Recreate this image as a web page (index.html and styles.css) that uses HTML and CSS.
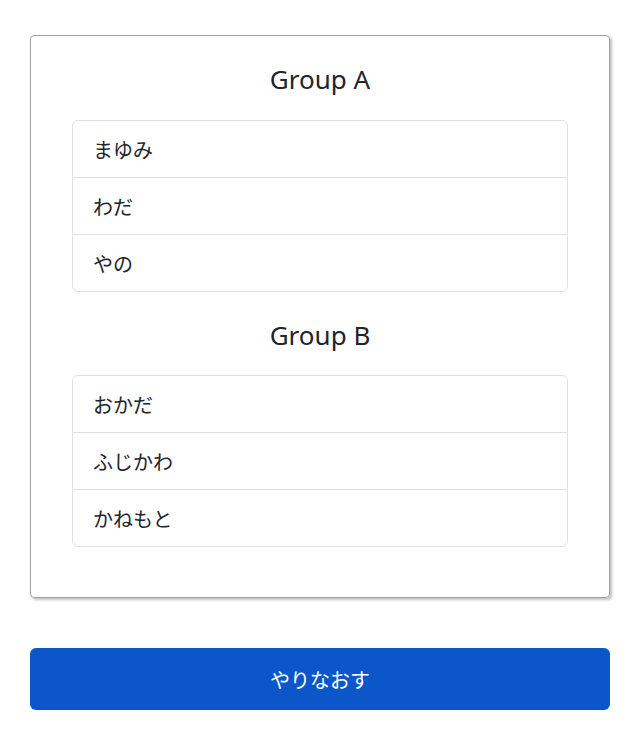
FILE: index.html
```html
<!DOCTYPE html>
<html lang="ja">
<head>
    <meta charset="UTF-8">
    <meta name="viewport" content="width=device-width, initial-scale=1.0">
    <title>グループ分け</title>
    <link rel="stylesheet" href="styles.css">
</head>
<body>
    <div class="card">
        <h2 class="group-title">Group A</h2>
        <ul class="member-list">
            <li>まゆみ</li>
            <li>わだ</li>
            <li>やの</li>
        </ul>

        <h2 class="group-title second">Group B</h2>
        <ul class="member-list">
            <li>おかだ</li>
            <li>ふじかわ</li>
            <li>かねもと</li>
        </ul>
    </div>

    <button class="retry-btn">やりなおす</button>
</body>
</html>
```

FILE: styles.css
```css
body {
    font-family: "Noto Sans", "Noto Sans CJK JP", sans-serif;
    color: #212529;
    margin: 0;
    padding: 35px 30px 0;
    background: #fff;
}
.card {
    border: 1px solid #a0a0a0;
    border-radius: 4px;
    box-shadow: 2px 2px 3px rgba(0, 0, 0, 0.25);
    padding: 26px 41px 50px;
}
.group-title {
    font-size: 26px;
    font-weight: 400;
    line-height: 34px;
    text-align: center;
    margin: 0 0 24px;
}
.group-title.second {
    margin-top: 26px;
    margin-bottom: 23px;
}
.member-list {
    list-style: none;
    margin: 0;
    padding: 0;
    border: 1px solid #dee2e6;
    border-radius: 6px;
}
.member-list li {
    font-size: 20px;
    line-height: 32px;
    padding: 14px 20px 10px;
    border-top: 1px solid #dee2e6;
}
.member-list li:first-child {
    border-top: none;
}
.retry-btn {
    display: block;
    width: 100%;
    margin-top: 50px;
    height: 62px;
    padding-top: 2px;
    border: none;
    border-radius: 6px;
    background-color: #0b57c9;
    color: #fff;
    font-family: "Noto Sans", "Noto Sans CJK JP", sans-serif;
    font-size: 20px;
    cursor: pointer;
}
.retry-btn:hover {
    background-color: #0a4db3;
}
```
